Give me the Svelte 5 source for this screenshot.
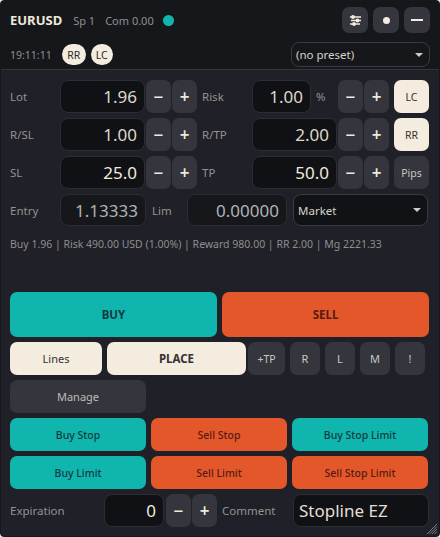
<script>
  const orders = [
    [['Buy Stop', 'buy'], ['Sell Stop', 'sell'], ['Buy Stop Limit', 'buy']],
    [['Buy Limit', 'buy'], ['Sell Limit', 'sell'], ['Sell Stop Limit', 'sell']]
  ];
</script>

<div class="window">
  <header class="head">
    <div class="line top">
      <strong class="sym">EURUSD</strong>
      <span class="stat sp">Sp 1</span>
      <span class="stat com">Com 0.00</span>
      <span class="dot"></span>
      <div class="tools">
        <button class="btn tool" aria-label="Settings">
          <svg width="13" height="11" viewBox="0 0 13 11"><path d="M1 2h11M2 5.5h10M1 9h10" stroke="#f3ecdf" stroke-width="1.4"/><circle cx="4" cy="2" r="1.9" fill="#f3ecdf"/><circle cx="8.5" cy="5.5" r="1.9" fill="#f3ecdf"/><circle cx="5" cy="9" r="1.9" fill="#f3ecdf"/></svg>
        </button>
        <button class="btn tool" aria-label="Dot"><span class="wdot"></span></button>
        <button class="btn tool" aria-label="Minimise"><span class="dash"></span></button>
      </div>
    </div>
    <div class="line second">
      <span class="stat time">19:11:11</span>
      <span class="pill rr">RR</span>
      <span class="pill lc">LC</span>
      <div class="select preset"><span>(no preset)</span><i class="caret"></i></div>
    </div>
  </header>

  <main class="body">
    <div class="row">
      <span class="lbl w50">Lot</span><div class="input w85">1.96</div>
      <button class="btn step">−</button><button class="btn step">+</button>
      <span class="lbl w50 ml5">Risk</span><div class="input w59">1.00</div>
      <span class="lbl pct">%</span>
      <button class="btn step">−</button><button class="btn step">+</button>
      <button class="btn cream side">LC</button>
    </div>
    <div class="row">
      <span class="lbl w50">R/SL</span><div class="input w85">1.00</div>
      <button class="btn step">−</button><button class="btn step">+</button>
      <span class="lbl w50 ml5">R/TP</span><div class="input w85">2.00</div>
      <button class="btn step">−</button><button class="btn step">+</button>
      <button class="btn cream side">RR</button>
    </div>
    <div class="row">
      <span class="lbl w50">SL</span><div class="input w85 bright">25.0</div>
      <button class="btn step">−</button><button class="btn step">+</button>
      <span class="lbl w50 ml5">TP</span><div class="input w85 bright">50.0</div>
      <button class="btn step">−</button><button class="btn step">+</button>
      <button class="btn side">Pips</button>
    </div>
    <div class="row entry">
      <span class="lbl w50">Entry</span><div class="input w86 dim">1.13333</div>
      <span class="lbl lim">Lim</span><div class="input w100 dim">0.00000</div>
      <div class="select market"><span>Market</span><i class="caret"></i></div>
    </div>
    <p class="info">Buy 1.96 | Risk 490.00 USD (1.00%) | Reward 980.00 | RR 2.00 | Mg 2221.33</p>

    <div class="row big">
      <button class="btn buy huge">BUY</button>
      <button class="btn sell huge">SELL</button>
    </div>
    <div class="row">
      <button class="btn cream lines">Lines</button>
      <button class="btn cream place">PLACE</button>
      <button class="btn tp">+TP</button>
      <button class="btn mini">R</button>
      <button class="btn mini">L</button>
      <button class="btn mini">M</button>
      <button class="btn mini">!</button>
    </div>
    <div class="row"><button class="btn third manage">Manage</button></div>
    {#each orders as group}
      <div class="row trio">
        {#each group as [label, kind]}
          <button class="btn third {kind}">{label}</button>
        {/each}
      </div>
    {/each}
    <div class="row">
      <span class="lbl exp">Expiration</span><div class="input w60 bright">0</div>
      <button class="btn step gap2">−</button><button class="btn step">+</button>
      <span class="lbl cmt">Comment</span><div class="input comment">Stopline EZ</div>
    </div>
  </main>
  <svg class="grip" width="12" height="12" viewBox="0 0 12 12"><path d="M1 11L11 1M3.5 11L11 3.5M6 11L11 6M8.5 11L11 8.5" stroke="#77787e" stroke-width="1"/></svg>
</div>

<style>
  :global(body) { margin: 0; background: #e9e9ec; }
  * { box-sizing: border-box; }
  .window {
    position: relative;
    width: 440px; height: 537px;
    background: #1f2028;
    border: 1px solid #17181c;
    border-radius: 4px;
    overflow: hidden;
    font-family: "Noto Sans", "Open Sans", sans-serif;
    font-size: 11px;
    color: #a9a9a6;
  }
  .head { height: 69px; background: #16171b; border-bottom: 1px solid #35363c; padding: 6px 9px 0; }
  .line { display: flex; align-items: center; }
  .top { height: 26px; }
  .second { height: 25px; margin-top: 9px; }
  .sym { font-size: 13px; font-weight: 700; color: #efe9dc; }
  .stat { font-size: 11px; color: #8f9092; }
  .time { font-size: 10.5px; }
  .sp { margin-left: 11px; }
  .com { margin-left: 10px; }
  .dot { width: 11px; height: 11px; border-radius: 50%; background: #10b5ae; margin-left: 9px; }
  .tools { margin-left: auto; display: flex; gap: 5px; }
  .btn {
    border: 0; margin: 0; padding: 0; flex: none;
    font: inherit; color: #c9c7c1;
    background: #34353d;
    border-radius: 7px;
    display: flex; align-items: center; justify-content: center;
  }
  .tool { width: 26px; height: 26px; }
  .wdot { width: 7px; height: 7px; border-radius: 50%; background: #f3ecdf; }
  .dash { width: 12px; height: 2px; background: #f3ecdf; }
  .pill {
    height: 21px; border-radius: 11px; background: #f3ecdf; color: #2a2a2e;
    font-size: 10.5px; display: flex; align-items: center; justify-content: center;
  }
  .rr { width: 24px; margin-left: 10px; }
  .lc { width: 22px; margin-left: 5px; }
  .select {
    background: #16171b; border: 1px solid #3a3b42; border-radius: 8px;
    color: #d6d3cb; display: flex; align-items: center; justify-content: space-between;
    padding: 0 6px 0 4px; flex: none;
  }
  .preset { margin-left: auto; width: 139px; height: 25px; font-size: 11.5px; }
  .market { width: 135px; height: 32px; margin-left: 6px; background: #111216; font-size: 11.5px; }
  .caret { width: 0; height: 0; border-left: 4px solid transparent; border-right: 4px solid transparent; border-top: 4px solid #cfccc5; }

  .body { padding: 10px 9px 0; display: flex; flex-direction: column; gap: 5px; }
  .row { display: flex; align-items: stretch; height: 33px; }
  .entry { height: 32px; }
  .trio { gap: 5px; }
  .lbl { display: flex; align-items: center; font-size: 11.5px; color: #93938f; flex: none; }
  .w50 { width: 50px; }
  .ml5 { margin-left: 5px; }
  .input {
    background: #101114; border: 1px solid #2c2d33; border-radius: 8px;
    color: #ddd8cc; font-size: 17px; line-height: 1; flex: none;
    display: flex; align-items: center; justify-content: flex-end;
    padding: 0 7px;
  }
  .bright { color: #efe9dc; }
  .dim { color: #aeb3b6; background: #16171b; }
  .w85 { width: 85px; }
  .w86 { width: 86px; }
  .w59 { width: 59px; }
  .w60 { width: 60px; }
  .w100 { width: 100px; }
  .pct { width: 26px; padding-left: 5px; }
  .lim { width: 35px; margin-left: 6px; }
  .step { width: 25px; font-size: 17px; font-weight: 600; color: #efe9dc; margin-left: 1px; }
  .side { width: 35px; margin-left: 5px; font-size: 10.5px; }
  .cream { background: #f3ecdf; color: #33332f; }
  .info { margin: 0; height: 38px; padding-top: 6px; font-size: 10.5px; color: #8e8e8c; white-space: nowrap; line-height: 15px; }
  .big { height: 45px; margin-top: 18px; gap: 5px; }
  .huge { width: 207px; font-weight: 700; font-size: 11.5px; }
  .buy { background: #10b5ae; color: #0e3b40; }
  .sell { background: #e3572b; color: #571b10; }
  .lines { width: 92px; font-size: 11px; }
  .place { width: 139px; margin-left: 5px; font-weight: 700; font-size: 11.5px; }
  .tp { width: 37px; margin-left: 2px; font-size: 10.5px; }
  .mini { width: 30px; margin-left: 5px; font-size: 11px; }
  .third { width: 136px; font-size: 10.5px; font-weight: 500; }
  .manage { font-size: 11px; color: #bdbcb7; font-weight: 400; }
  .exp { width: 94px; }
  .gap2 { margin-left: 2px; }
  .cmt { width: 71px; margin-left: 5px; }
  .comment { width: 136px; justify-content: flex-start; padding: 0 5px; color: #e3dfd4; }
  .grip { position: absolute; right: 1px; bottom: 1px; }
</style>
